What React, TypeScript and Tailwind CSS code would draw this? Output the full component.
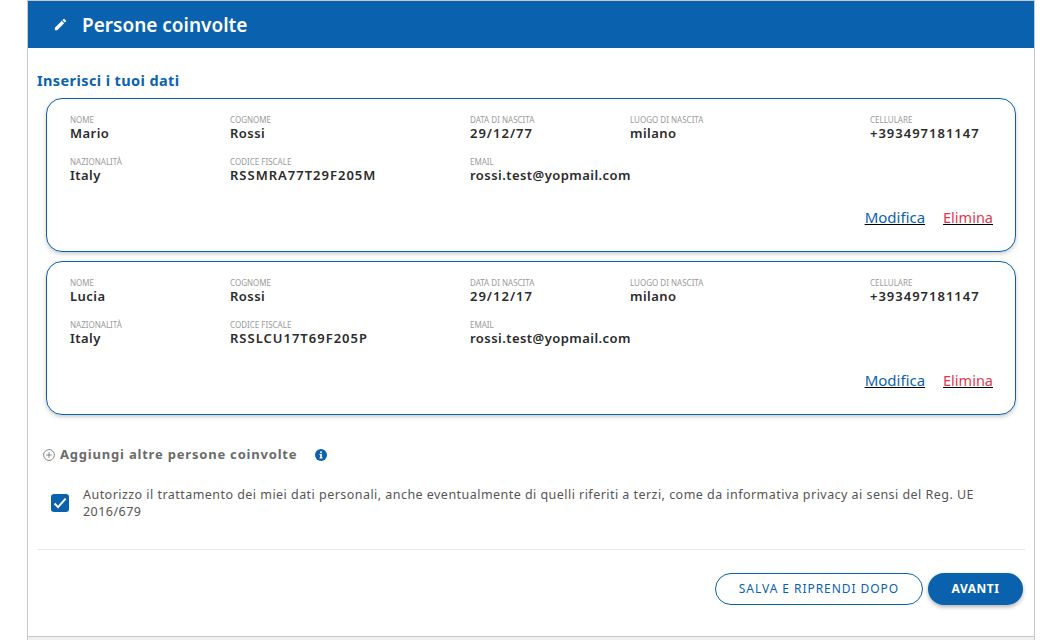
import React from "react";

const font = { fontFamily: '"Noto Sans", "Open Sans", sans-serif' };

function Field({ label, value, wide }: { label: string; value: string; wide?: boolean }) {
  return (
    <div>
      <div className="text-[8px] leading-[11px] text-[#9a9a9a] uppercase whitespace-nowrap">{label}</div>
      <div
        className={
          wide
            ? "text-[13px] leading-[17px] font-semibold tracking-[1px] text-[#2b2b2b] whitespace-nowrap"
            : "text-[13px] leading-[17px] font-semibold tracking-[0.45px] text-[#2b2b2b] whitespace-nowrap"
        }
      >
        {value}
      </div>
    </div>
  );
}

function Card({ nome, data, cf }: { nome: string; data: string; cf: string }) {
  return (
    <div className="mx-[9px] h-[154px] rounded-[16px] border border-[#0a62ae] bg-white shadow-[0_2px_4px_rgba(0,0,0,0.2)] pl-[23px] pr-[22px] pt-[15px] flex flex-col">
      <div className="grid grid-cols-[160px_240px_160px_240px_1fr] gap-y-[14px]">
        <Field label="Nome" value={nome} />
        <Field label="Cognome" value="Rossi" />
        <Field label="Data di nascita" value={data} wide />
        <Field label="Luogo di nascita" value="milano" />
        <Field label="Cellulare" value="+393497181147" wide />
        <Field label="Nazionalità" value="Italy" />
        <Field label="Codice fiscale" value={cf} wide />
        <Field label="Email" value="rossi.test@yopmail.com" />
      </div>
      <div className="flex justify-end items-baseline gap-[18px] mt-[23px] text-[15px] leading-[20px] underline">
        <span className="text-[#0a62ae]">Modifica</span>
        <span className="text-[14.5px] text-[#e0394f]">Elimina</span>
      </div>
    </div>
  );
}

export default function App() {
  return (
    <div className="h-[640px] w-[1057px] overflow-hidden bg-white" style={font}>
      <div className="ml-[27px] w-[1008px] h-[640px] border-x border-t border-[#c8c8c8] flex flex-col">
        <div className="h-[47px] bg-[#0a62ae] flex items-center pl-[25px] shrink-0">
          <svg width="15" height="15" viewBox="0 0 24 24" fill="#fff" className="mr-[14px]">
            <path d="M3 17.25V21h3.75L17.81 9.94l-3.75-3.75L3 17.25zM20.71 7.04a1 1 0 0 0 0-1.41l-2.34-2.34a1 1 0 0 0-1.41 0l-1.83 1.83 3.75 3.75 1.83-1.83z" />
          </svg>
          <span className="text-[19px] font-semibold text-white leading-[28px]">Persone coinvolte</span>
        </div>
        <div className="pl-[9px] pr-[9px] flex-1 flex flex-col">
          <h2 className="mt-[22px] h-[20px] text-[14.5px] leading-[20px] font-bold tracking-[0.4px] text-[#0a62ae]">Inserisci i tuoi dati</h2>
          <div className="mt-[8px] flex flex-col gap-[9px]">
            <Card nome="Mario" data="29/12/77" cf="RSSMRA77T29F205M" />
            <Card nome="Lucia" data="29/12/17" cf="RSSLCU17T69F205P" />
          </div>
          <div className="mt-[30px] ml-[6px] flex items-center h-[20px]">
            <svg width="12" height="12" viewBox="0 0 12 12" fill="none" stroke="#6b6b6b" strokeWidth="0.8">
              <circle cx="6" cy="6" r="5.4" />
              <path d="M6 3.2v5.6M3.2 6h5.6" />
            </svg>
            <span className="ml-[5px] text-[13px] font-bold tracking-[0.8px] text-[#6b6b6b]">Aggiungi altre persone coinvolte</span>
            <svg width="12" height="12" viewBox="0 0 12 12" className="ml-[18px]">
              <circle cx="6" cy="6" r="6" fill="#0a62ae" />
              <rect x="5.1" y="2.4" width="1.8" height="1.7" fill="#fff" />
              <path d="M4.5 5h2.4v3.6h.7v1H4.5v-1h.7V6h-.7z" fill="#fff" />
            </svg>
          </div>
          <div className="mt-[21px] ml-[14px] flex items-start">
            <div className="mt-[8px] w-[18px] h-[18px] rounded-[3px] bg-[#0a62ae] flex items-center justify-center shrink-0">
              <svg width="14" height="12" viewBox="0 0 14 12" fill="none" stroke="#fff" strokeWidth="2">
                <path d="M1.5 6.5l3.6 3.6 7.5-8.4" />
              </svg>
            </div>
            <p className="ml-[14px] w-[900px] text-[12.5px] leading-[17px] tracking-[0.46px] text-[#555]">
              Autorizzo il trattamento dei miei dati personali, anche eventualmente di quelli riferiti a terzi, come da informativa privacy ai sensi del Reg. UE 2016/679
            </p>
          </div>
          <div className="mt-[29px] border-t border-[#e8e8e8] flex justify-end items-center gap-[5px] pt-[23px] pr-[2px]">
            <button className="w-[208px] h-[32px] rounded-full border border-[#0a62ae] bg-white text-[12px] tracking-[0.95px] text-[#0a62ae]">
              SALVA E RIPRENDI DOPO
            </button>
            <button className="w-[95px] h-[32px] rounded-full bg-[#0a62ae] text-[12px] font-bold tracking-[0.5px] text-white shadow-[0_2px_4px_rgba(0,0,0,0.3)]">
              AVANTI
            </button>
          </div>
        </div>
        <div className="h-[4px] bg-[#f0f0f0] border-t border-[#c8c8c8] shrink-0" />
      </div>
    </div>
  );
}
